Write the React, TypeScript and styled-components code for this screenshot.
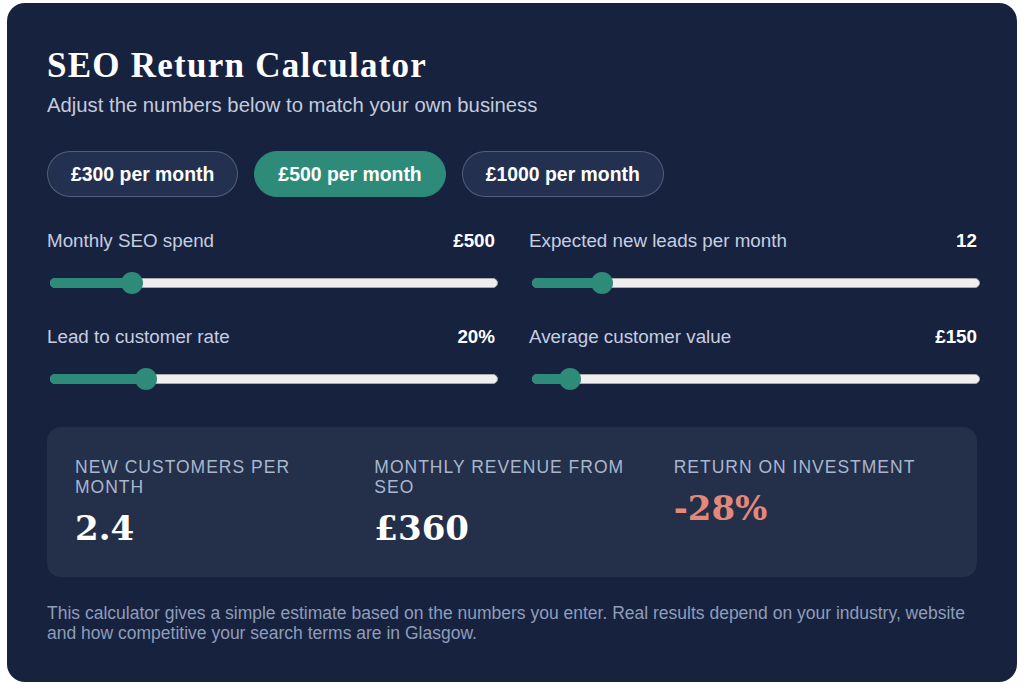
import React, { useState } from "react";
import styled, { createGlobalStyle } from "styled-components";

const GlobalStyle = createGlobalStyle`
  html, body { margin: 0; padding: 0; background: #ffffff; }
  body { font-family: "Liberation Sans", Arial, sans-serif; }
  * { box-sizing: border-box; }
`;

const Page = styled.div`
  padding: 3px 7px 8px 7px;
`;

const Card = styled.section`
  background: #17223f;
  border-radius: 18px;
  padding: 44px 40px 39px;
  color: #ffffff;
`;

const Title = styled.h2`
  margin: 0;
  font-family: "Liberation Serif", "Times New Roman", serif;
  font-weight: 700;
  font-size: 35px;
  line-height: 38px;
  letter-spacing: 1.25px;
  color: #ffffff;
`;

const Subtitle = styled.p`
  margin: 8px 0 0;
  font-size: 20.3px;
  line-height: 24px;
  color: #c3cbdd;
`;

const PresetRow = styled.div`
  display: flex;
  gap: 16px;
  margin-top: 34px;
`;

const Pill = styled.button<{ $active: boolean }>`
  height: 46px;
  padding: 0 23px;
  border-radius: 999px;
  border: 1px solid ${(p) => (p.$active ? "#2e8b7a" : "rgba(255, 255, 255, 0.22)")};
  background: ${(p) => (p.$active ? "#2e8b7a" : "#243050")};
  color: #ffffff;
  font-family: "Liberation Sans", Arial, sans-serif;
  font-weight: 700;
  font-size: 19.4px;
  cursor: pointer;
`;

const Fields = styled.div`
  display: grid;
  grid-template-columns: 1fr 1fr;
  column-gap: 34px;
  row-gap: 31px;
  margin-top: 32px;
`;

const Field = styled.div`
  display: flex;
  flex-direction: column;
`;

const FieldHead = styled.div`
  display: flex;
  justify-content: space-between;
  align-items: baseline;
  font-size: 18.8px;
  line-height: 24px;
`;

const FieldLabel = styled.span`
  color: #c6cee0;
`;

const FieldValue = styled.span`
  color: #ffffff;
  font-weight: 700;
`;

const RangeWrap = styled.div`
  position: relative;
  height: 22px;
  margin: 19px -3px 0 3px;
`;

const Track = styled.div`
  position: absolute;
  left: 0;
  right: 0;
  top: 6px;
  height: 10px;
  border-radius: 5px;
  background: #efefef;
  border: 1px solid #a9a9a9;
`;

const Fill = styled.div`
  position: absolute;
  left: 0;
  top: 6px;
  height: 10px;
  border-radius: 5px;
  background: #2e8b7a;
`;

const Thumb = styled.div`
  position: absolute;
  top: 0;
  width: 22px;
  height: 22px;
  border-radius: 50%;
  background: #2e8b7a;
`;

const NativeInput = styled.input`
  position: absolute;
  inset: 0;
  width: 100%;
  height: 100%;
  margin: 0;
  opacity: 0;
  cursor: pointer;
`;

const Results = styled.div`
  display: grid;
  grid-template-columns: repeat(3, 1fr);
  column-gap: 24px;
  margin-top: 37px;
  height: 150px;
  padding: 30px 28px;
  border-radius: 14px;
  background: #242f4a;
`;

const Stat = styled.div`
  display: flex;
  flex-direction: column;
`;

const StatLabel = styled.div`
  font-size: 17.5px;
  line-height: 20px;
  letter-spacing: 1px;
  text-transform: uppercase;
  color: #a9b7cf;
`;

const StatValue = styled.div<{ $tone?: "negative" | "normal" }>`
  margin-top: 11px;
  font-family: "DejaVu Serif", "Liberation Serif", serif;
  font-weight: 700;
  font-size: 34px;
  line-height: 40px;
  color: ${(p) => (p.$tone === "negative" ? "#e3897a" : "#ffffff")};
`;

const Note = styled.p`
  margin: 26px 0 0;
  font-size: 17.5px;
  line-height: 20px;
  color: #8e9dba;
`;

type RangeProps = {
  min: number;
  max: number;
  step: number;
  value: number;
  onChange: (v: number) => void;
};

function Range({ min, max, step, value, onChange }: RangeProps) {
  const pct = (value - min) / (max - min);
  return (
    <RangeWrap>
      <Track />
      <Fill style={{ width: `calc(11px + ${pct} * (100% - 22px))` }} />
      <Thumb style={{ left: `calc(${pct} * (100% - 22px))` }} />
      <NativeInput
        type="range"
        min={min}
        max={max}
        step={step}
        value={value}
        onChange={(e) => onChange(Number(e.target.value))}
      />
    </RangeWrap>
  );
}

const presets = [300, 500, 1000];

export default function App() {
  const [spend, setSpend] = useState(500);
  const [leads, setLeads] = useState(12);
  const [rate, setRate] = useState(20);
  const [avgValue, setAvgValue] = useState(150);

  const customers = (leads * rate) / 100;
  const revenue = Math.round(customers * avgValue);
  const roi = Math.round(((revenue - spend) / spend) * 100);
  const customersText = customers.toFixed(1).replace(/\.0$/, "");

  return (
    <>
      <GlobalStyle />
      <Page>
        <Card>
          <Title>SEO Return Calculator</Title>
          <Subtitle>Adjust the numbers below to match your own business</Subtitle>

          <PresetRow>
            {presets.map((p) => (
              <Pill key={p} $active={spend === p} onClick={() => setSpend(p)}>
                £{p} per month
              </Pill>
            ))}
          </PresetRow>

          <Fields>
            <Field>
              <FieldHead>
                <FieldLabel>Monthly SEO spend</FieldLabel>
                <FieldValue>£{spend}</FieldValue>
              </FieldHead>
              <Range min={100} max={2500} step={50} value={spend} onChange={setSpend} />
            </Field>
            <Field>
              <FieldHead>
                <FieldLabel>Expected new leads per month</FieldLabel>
                <FieldValue>{leads}</FieldValue>
              </FieldHead>
              <Range min={1} max={80} step={1} value={leads} onChange={setLeads} />
            </Field>
            <Field>
              <FieldHead>
                <FieldLabel>Lead to customer rate</FieldLabel>
                <FieldValue>{rate}%</FieldValue>
              </FieldHead>
              <Range min={0} max={100} step={1} value={rate} onChange={setRate} />
            </Field>
            <Field>
              <FieldHead>
                <FieldLabel>Average customer value</FieldLabel>
                <FieldValue>£{avgValue}</FieldValue>
              </FieldHead>
              <Range min={0} max={2400} step={10} value={avgValue} onChange={setAvgValue} />
            </Field>
          </Fields>

          <Results>
            <Stat>
              <StatLabel>New customers per month</StatLabel>
              <StatValue>{customersText}</StatValue>
            </Stat>
            <Stat>
              <StatLabel>Monthly revenue from SEO</StatLabel>
              <StatValue>£{revenue}</StatValue>
            </Stat>
            <Stat>
              <StatLabel>Return on investment</StatLabel>
              <StatValue $tone={roi < 0 ? "negative" : "normal"}>{roi}%</StatValue>
            </Stat>
          </Results>

          <Note>
            This calculator gives a simple estimate based on the numbers you enter. Real results depend on
            your industry, website and how competitive your search terms are in Glasgow.
          </Note>
        </Card>
      </Page>
    </>
  );
}
